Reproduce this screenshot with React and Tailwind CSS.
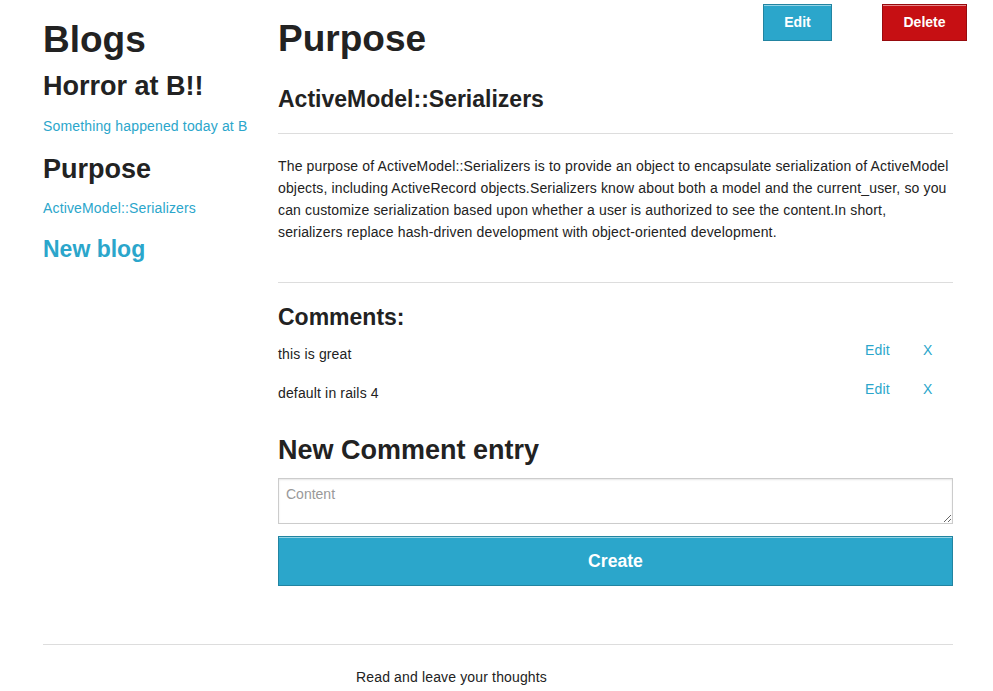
import React from 'react';

const blogs = [
  { title: 'Horror at B!!', link: 'Something happened today at B' },
  { title: 'Purpose', link: 'ActiveModel::Serializers' },
];

const comments = ['this is great', 'default in rails 4'];

const App = () => {
  return (
    <div className="min-h-screen bg-white text-[#222] font-['Liberation_Sans',Arial,sans-serif]">
      <div className="relative w-[940px] ml-[28px]">
        {/* Botones arriba */}
        <div className="absolute top-[4px] right-[1px] flex gap-[50px]">
          <button className="w-[69px] h-[37px] bg-[#2ba6cb] border border-[#2284a1] shadow-[inset_0_1px_0_rgba(255,255,255,0.5)] text-white text-[14px] font-bold">
            Edit
          </button>
          <button className="w-[85px] h-[37px] bg-[#c60f13] border border-[#970b0e] shadow-[inset_0_1px_0_rgba(255,255,255,0.5)] text-white text-[14px] font-bold">
            Delete
          </button>
        </div>

        <div className="flex">
          {/* Sidebar */}
          <div className="w-[235px] px-[15px]">
            <h2 className="mt-[18px] text-[37px] leading-[44px] font-bold">Blogs</h2>
            {blogs.map((b, idx) => (
              <div key={idx}>
                <h3 className={`${idx === 0 ? 'mt-[8px]' : 'mt-[16px]'} text-[27px] leading-[32px] font-bold`}>{b.title}</h3>
                <a className={`block ${idx === 0 ? 'mt-[13px]' : 'mt-[12px]'} text-[14px] leading-[22px] tracking-[0.15px] text-[#2ba6cb] whitespace-nowrap`}>{b.link}</a>
              </div>
            ))}
            <a className="block mt-[16px] text-[23px] leading-[28px] font-bold text-[#2ba6cb]">New blog</a>
          </div>

          {/* Main */}
          <div className="w-[705px] px-[15px]">
            <h2 className="mt-[17px] text-[37px] leading-[44px] font-bold">Purpose</h2>
            <h4 className="mt-[24px] text-[23px] leading-[28px] font-bold">ActiveModel::Serializers</h4>
            <div className="mt-[20px] h-px bg-[#ddd]"></div>
            <p className="mt-[21px] text-[14px] leading-[22px] tracking-[0.15px]">
              The purpose of ActiveModel::Serializers is to provide an object to encapsulate serialization of ActiveModel objects, including ActiveRecord objects.Serializers know about both a model and the current_user, so you can customize serialization based upon whether a user is authorized to see the content.In short, serializers replace hash-driven development with object-oriented development.
            </p>
            <div className="mt-[39px] h-px bg-[#ddd]"></div>

            <h4 className="mt-[20px] text-[23px] leading-[28px] font-bold">Comments:</h4>
            <div className="mt-[12px] flex flex-col gap-[17px]">
              {comments.map((c, idx) => (
                <div key={idx} className="flex items-start text-[14px] leading-[22px] tracking-[0.15px]">
                  <span className="flex-1">{c}</span>
                  <a className="w-[58px] -mt-[4px] text-[#2ba6cb]">Edit</a>
                  <a className="w-[30px] -mt-[4px] text-[#2ba6cb]">X</a>
                </div>
              ))}
            </div>

            <h3 className="mt-[30px] text-[27px] leading-[32px] font-bold">New Comment entry</h3>
            <textarea
              placeholder="Content"
              className="block mt-[12px] w-full h-[46px] border border-[#ccc] shadow-[inset_0_1px_2px_rgba(0,0,0,0.1)] px-[7px] py-[5px] text-[14px] leading-[20px] placeholder:text-[#999] outline-none"
            ></textarea>
            <button className="block mt-[12px] w-full h-[50px] bg-[#2ba6cb] border border-[#2284a1] shadow-[inset_0_1px_0_rgba(255,255,255,0.5)] text-white text-[17.6px] font-bold">
              Create
            </button>
          </div>
        </div>

        {/* Footer */}
        <div className="px-[15px]">
          <div className="mt-[58px] h-px bg-[#ddd]"></div>
          <p className="mt-[21px] ml-[313px] text-[14px] leading-[22px] tracking-[0.15px]">Read and leave your thoughts</p>
        </div>
      </div>
    </div>
  );
};

export default App;
